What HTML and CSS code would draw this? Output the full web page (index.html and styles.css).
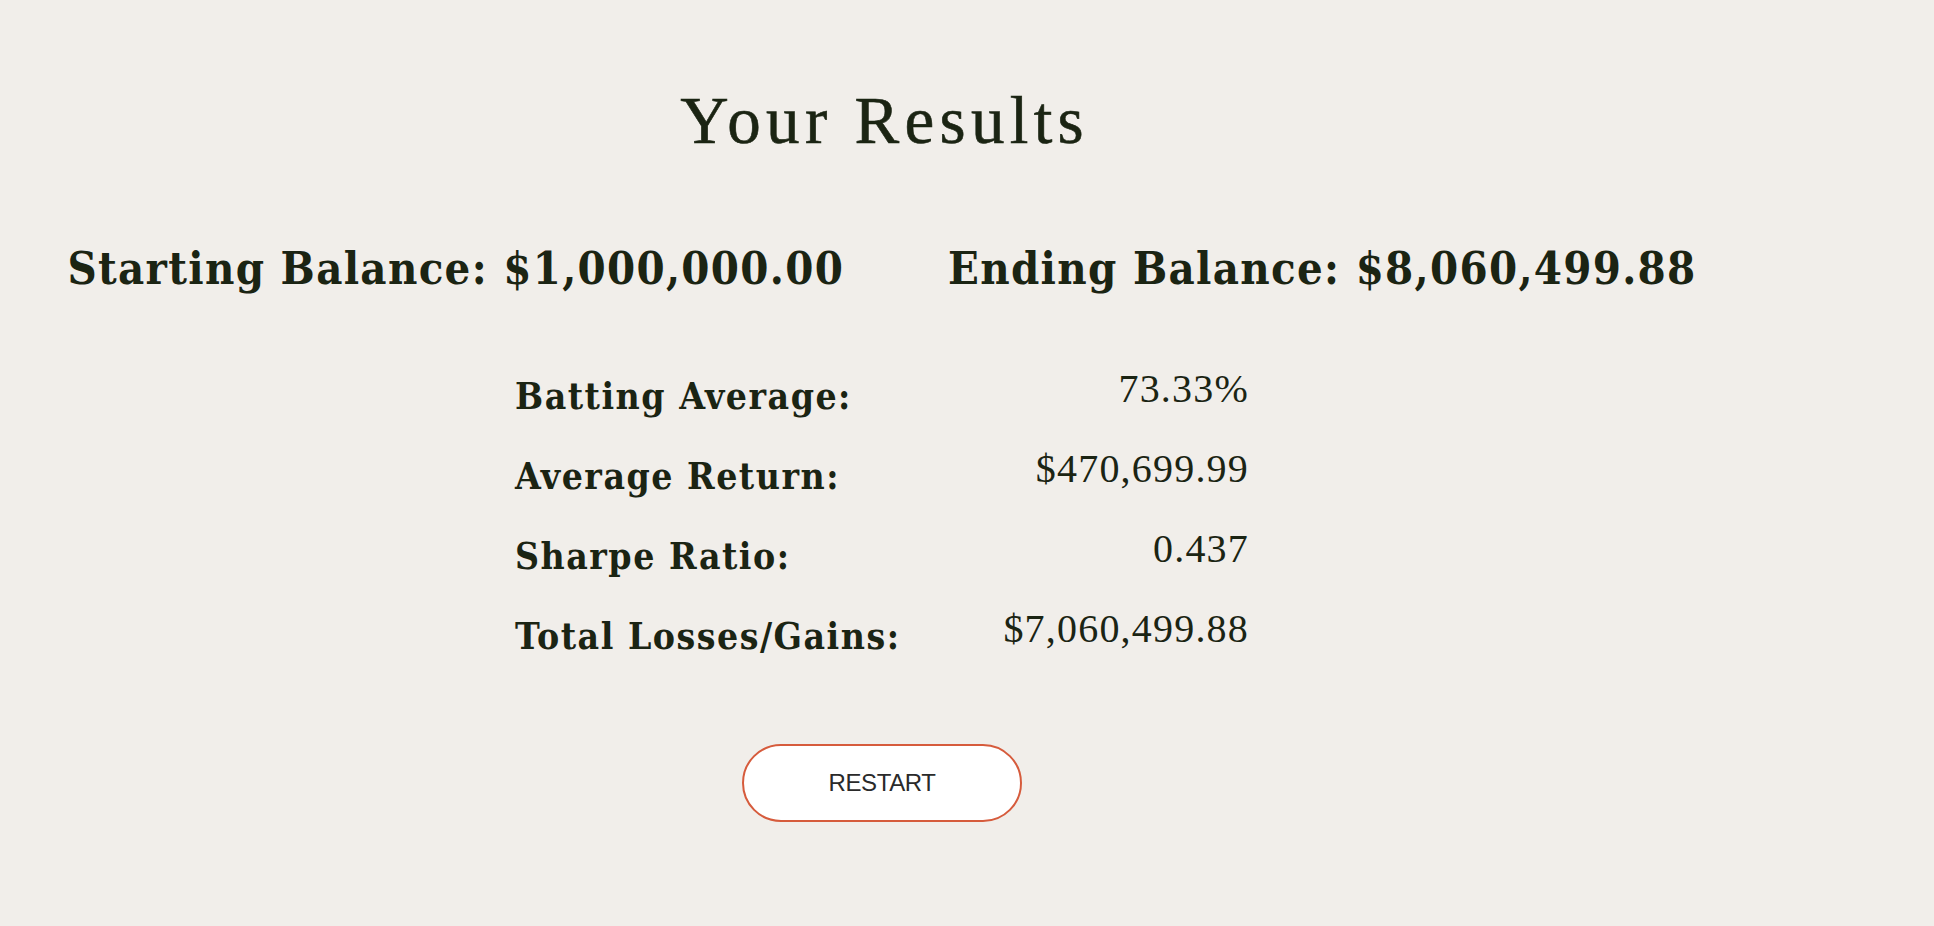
FILE: index.html
```html
<!DOCTYPE html>
<html lang="en">
<head>
<meta charset="utf-8">
<title>Your Results</title>
<link rel="stylesheet" href="styles.css">
</head>
<body>
<main class="page">
  <h1 class="title">Your Results</h1>
  <div class="balances">
    <div class="balance">Starting Balance: $1,000,000.00</div>
    <div class="balance">Ending Balance: $8,060,499.88</div>
  </div>
  <div class="stats">
    <div class="label">Batting Average:</div>
    <div class="value">73.33%</div>
    <div class="label">Average Return:</div>
    <div class="value">$470,699.99</div>
    <div class="label">Sharpe Ratio:</div>
    <div class="value">0.437</div>
    <div class="label">Total Losses/Gains:</div>
    <div class="value">$7,060,499.88</div>
  </div>
  <div class="actions">
    <button class="restart" type="button">RESTART</button>
  </div>
</main>
</body>
</html>
```
FILE: styles.css
```css
html, body {
  margin: 0;
  padding: 0;
  background: #f1eeea;
}

body {
  color: #1b2413;
  font-family: "Liberation Serif", serif;
}

.page {
  width: 1764px;
  padding-top: 80px;
  display: flex;
  flex-direction: column;
  align-items: center;
}

.title {
  margin: 0;
  font-family: "Liberation Serif", serif;
  font-weight: 400;
  font-size: 67px;
  line-height: 80px;
  letter-spacing: 5.3px;
  padding-left: 5.3px;
  color: #1b2413;
  -webkit-text-stroke: 0.6px #1b2413;
}

.balances {
  margin-top: 79px;
  display: flex;
  justify-content: center;
  gap: 104px;
}

.balance {
  font-family: "DejaVu Serif Condensed", "DejaVu Serif", serif;
  font-stretch: condensed;
  font-weight: 700;
  font-size: 45px;
  line-height: 60px;
  letter-spacing: 1.3px;
  white-space: nowrap;
}

.stats {
  margin-top: 57px;
  width: 734px;
  display: grid;
  grid-template-columns: auto auto;
  justify-content: space-between;
  grid-auto-rows: 80px;
  align-items: start;
}

.label {
  font-family: "DejaVu Serif Condensed", "DejaVu Serif", serif;
  font-stretch: condensed;
  font-weight: 700;
  font-size: 37px;
  line-height: 80px;
  letter-spacing: 1.5px;
  white-space: nowrap;
}

.value {
  font-family: "Liberation Serif", serif;
  font-size: 40px;
  line-height: 66px;
  letter-spacing: 1.2px;
  text-align: right;
  white-space: nowrap;
}

.actions {
  margin-top: 68px;
  display: flex;
  justify-content: center;
}

.restart {
  box-sizing: border-box;
  width: 280px;
  height: 78px;
  border: 2px solid #d65b3c;
  border-radius: 39px;
  background: #ffffff;
  color: #2a2a2a;
  font-family: "Liberation Sans", Arial, sans-serif;
  font-size: 24px;
  letter-spacing: -0.4px;
  padding: 0;
  display: flex;
  align-items: center;
  justify-content: center;
  cursor: pointer;
}
```
